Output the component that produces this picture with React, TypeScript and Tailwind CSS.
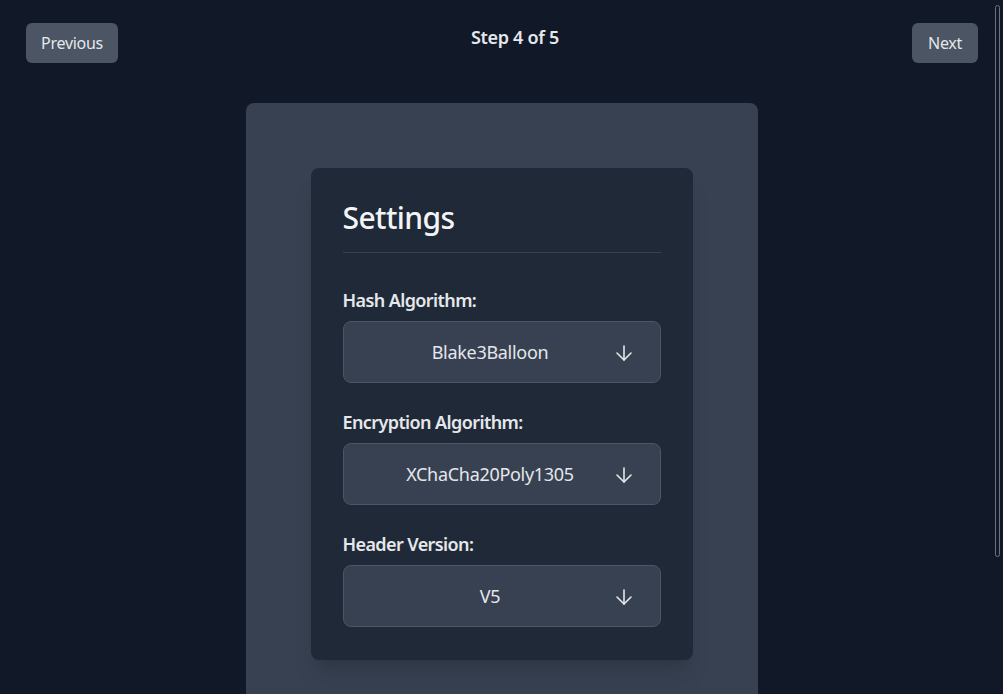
import React from "react";
import { ArrowDown } from "lucide-react";

const fields = [
  { label: "Hash Algorithm:", value: "Blake3Balloon" },
  { label: "Encryption Algorithm:", value: "XChaCha20Poly1305" },
  { label: "Header Version:", value: "V5" },
];

const Select = ({ value }: { value: string }) => {
  return (
    <div className="flex items-center h-[62px] pl-[25px] pr-[24px] bg-[#374151] border border-[#4b5563] rounded-lg">
      <span className="flex-1 text-center text-[18px] tracking-[-0.3px] text-gray-200">{value}</span>
      <ArrowDown size={24} strokeWidth={1.6} className="text-gray-200 mt-[2px]" />
    </div>
  );
};

const App = () => {
  return (
    <div
      className="relative min-h-screen h-[694px] overflow-hidden bg-[#111827] text-gray-100"
      style={{ fontFamily: '"Noto Sans", sans-serif' }}
    >
      {/* header */}
      <div className="flex justify-between items-start pl-[26px] pr-[25px] pt-[23px]">
        <button className="h-[40px] w-[92px] rounded-md bg-[#4b5563] text-gray-200 text-base tracking-[-0.3px]">Previous</button>
        <div className="text-[18px] leading-7 font-semibold tracking-[-0.3px] text-gray-200">Step 4 of 5</div>
        <button className="h-[40px] w-[66px] rounded-md bg-[#4b5563] text-gray-200 text-base tracking-[-0.3px]">Next</button>
      </div>

      {/* panel */}
      <div className="w-[512px] mx-auto mt-[40px] bg-[#374151] rounded-lg px-[65px] pt-[65px] pb-[65px]">
        <div className="bg-[#1f2937] rounded-lg px-8 pt-8 pb-[33px] shadow-xl">
          <h2 className="text-[30px] leading-9 font-medium tracking-[-0.6px] text-gray-100 pb-4 border-b border-[#374151]">Settings</h2>
          <div className="flex flex-col gap-[25px] mt-[33px]">
            {fields.map((f) => (
              <div key={f.label}>
                <div className="text-[18px] leading-7 font-semibold tracking-[-0.6px] text-gray-200 mb-[7px]">{f.label}</div>
                <Select value={f.value} />
              </div>
            ))}
          </div>
        </div>
      </div>

      {/* scrollbar outline */}
      <div className="absolute right-[3px] top-[5px] w-[5px] h-[552px] border border-[#6b7280] rounded-sm" />
    </div>
  );
};

export default App;
